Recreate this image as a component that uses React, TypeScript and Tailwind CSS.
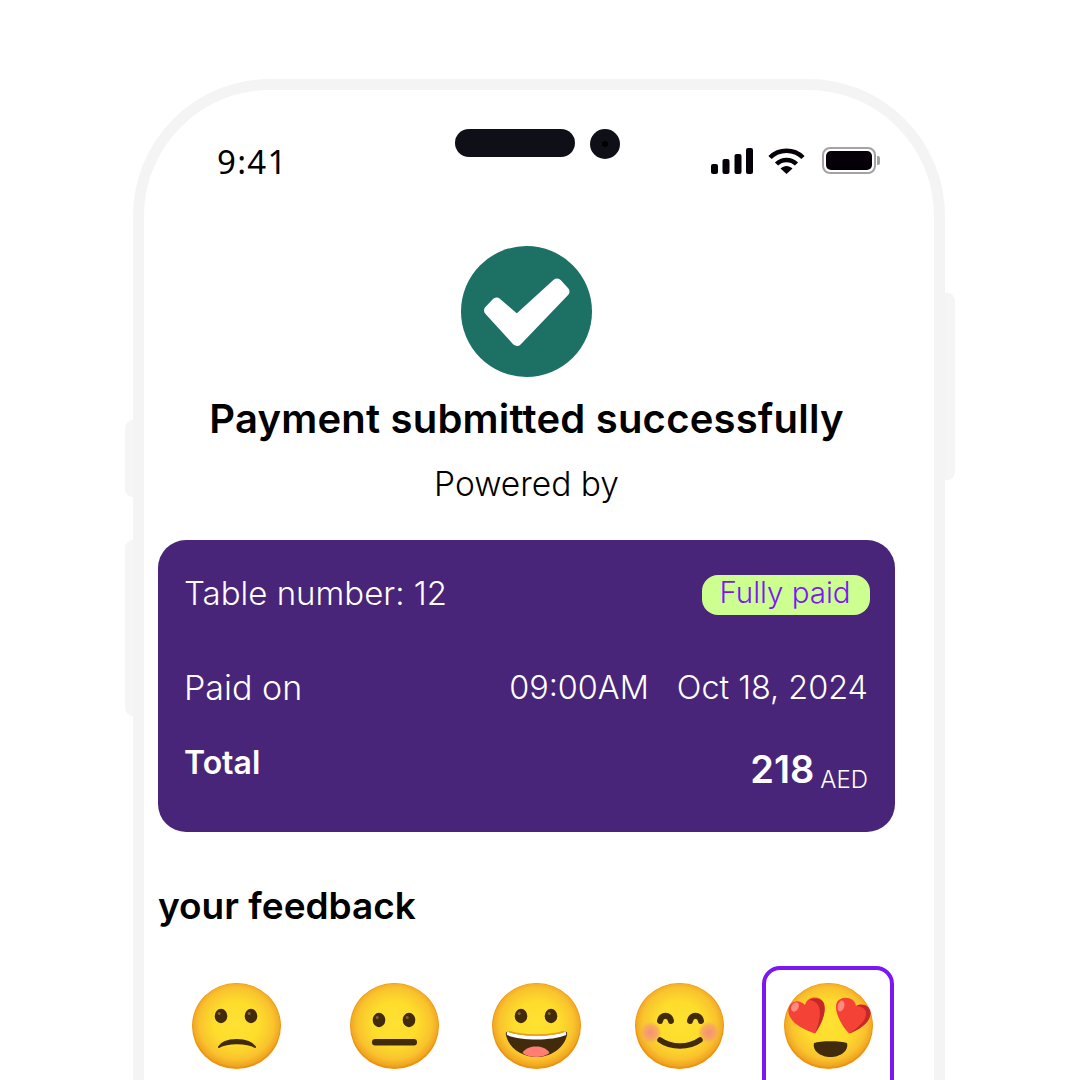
function Defs() {
  return (
    <svg width="0" height="0" className="absolute">
      <defs>
        <radialGradient id="face" cx="50%" cy="48%" r="52%">
          <stop offset="0%" stopColor="#fee133" />
          <stop offset="50%" stopColor="#fedd2b" />
          <stop offset="82%" stopColor="#f9c32e" />
          <stop offset="100%" stopColor="#f0a01e" />
        </radialGradient>
        <radialGradient id="cheek" cx="50%" cy="50%" r="50%">
          <stop offset="0%" stopColor="#f78c7a" />
          <stop offset="70%" stopColor="#f7a860" stopOpacity="0.9" />
          <stop offset="100%" stopColor="#f7b840" stopOpacity="0.3" />
        </radialGradient>
      </defs>
    </svg>
  );
}

function Face({ children, className }: { children?: React.ReactNode; className?: string }) {
  return (
    <svg width="89" height="86" viewBox="0 0 89 86" className={className}>
      <ellipse cx="44.5" cy="43" rx="44.5" ry="43" fill="#ec9410" />
      <ellipse cx="44.5" cy="42.2" rx="43.6" ry="41.8" fill="url(#face)" />
      {children}
    </svg>
  );
}

function Eye({ x, y }: { x: number; y: number }) {
  return (
    <g>
      <ellipse cx={x} cy={y} rx="6.3" ry="7.2" fill="#422b0d" />
      <circle cx={x - 1.8} cy={y - 2.6} r="1.5" fill="#896024" />
    </g>
  );
}

function Sad() {
  return (
    <Face>
      <Eye x={29} y={33} />
      <Eye x={59} y={33} />
      <path d="M27 64C32 54.5 57 54.5 63 64C55 59 35 59 27 64Z" fill="#422b0d" stroke="#422b0d" strokeWidth="2" strokeLinejoin="round" />
    </Face>
  );
}

function Neutral() {
  return (
    <Face>
      <Eye x={29} y={37} />
      <Eye x={59} y={37} />
      <rect x="22" y="56" width="45" height="6.5" rx="3.2" fill="#422b0d" />
    </Face>
  );
}

function Grin() {
  return (
    <Face>
      <Eye x={29} y={33} />
      <Eye x={59} y={33} />
      <path d="M17 49C30 54 59 54 72 49C75 48 75.5 50 75 52C72 66 58 74 44.5 74C31 74 17 66 14 52C13.5 50 14 48 17 49Z" fill="#422b0d" />
      <path d="M17 49C30 54 59 54 72 49C74 48.3 74.5 50 74 52C60 58 29 58 15 52C14.5 50 15 48.3 17 49Z" fill="#fff" />
      <path d="M17 48.5C30 53 59 53 72 48.5" fill="none" stroke="#eb9c1a" strokeWidth="1.5" />
      <path d="M30.5 70C33 65 39 63.5 44 63.5C49 63.5 55 65 57.5 70C53 73 48 74 44.5 74C40 74 35 73 30.5 70Z" fill="#ff7d72" />
    </Face>
  );
}

function Smile() {
  return (
    <Face>
      <circle cx="15.5" cy="49.5" r="10.5" fill="url(#cheek)" />
      <circle cx="74" cy="49.5" r="10.5" fill="url(#cheek)" />
      <path d="M25 38C26 31 35 31 36 38" fill="none" stroke="#422b0d" strokeWidth="6" strokeLinecap="round" />
      <path d="M55 38C56 31 65 31 66 38" fill="none" stroke="#422b0d" strokeWidth="6" strokeLinecap="round" />
      <path d="M25 57C36 65 54 65 65 57" fill="none" stroke="#422b0d" strokeWidth="5.5" strokeLinecap="round" />
    </Face>
  );
}

function Love() {
  return (
    <Face>
      <path d="M30 60C36 57.5 57 57.5 63 60C65 68 56 74 46.5 74C37 74 28 68 30 60Z" fill="#422b0d" />
      <path d="M31 50.5C21 47 6 41 4.5 29C3.5 20 13 14 21 22C23 13 36 12 40 20C43 29 37 42 31 50.5Z" fill="#f44336" />
      <path d="M24 17.5C30 14 37 15 39.5 20C43 29 37 42 31 50.5C36 38 39 24 31 19C29 17.5 26 17 24 17.5Z" fill="#c62828" />
      <ellipse cx="11" cy="24" rx="3.5" ry="5" fill="#ff8a80" transform="rotate(30 11 24)" />
      <path d="M65 50.5C75 47 85.5 40 86.5 31C87.5 24 80 19 72 23C71 14 58 12 53 19C49 27 57 42 65 50.5Z" fill="#f44336" />
      <path d="M72 23C78 19.5 87 23 86.5 31C85.5 40 75 47 65 50.5C75 44 83 37 82 29C81 25 76 23 72 23Z" fill="#c62828" />
      <ellipse cx="57" cy="23" rx="3.3" ry="5.5" fill="#ff8a80" transform="rotate(15 57 23)" />
    </Face>
  );
}

function Signal() {
  return (
    <svg width="42" height="26" viewBox="0 0 42 26" fill="#050008">
      <rect x="0" y="16" width="7" height="10" rx="2" />
      <rect x="11.5" y="11" width="7" height="15" rx="2" />
      <rect x="23.5" y="6" width="7" height="20" rx="2" />
      <rect x="35" y="0" width="7" height="26" rx="2" />
    </svg>
  );
}

function Wifi() {
  return (
    <svg width="37" height="26" viewBox="0 0 37 26" fill="none">
      <path d="M2 9.5C11 0.5 26 0.5 35 9.5" stroke="#050008" strokeWidth="4.5" />
      <path d="M8.5 16C14 10.5 23 10.5 28.5 16" stroke="#050008" strokeWidth="4.5" />
      <path d="M12.5 20.5C16 17 21 17 24.5 20.5L18.5 26Z" fill="#050008" />
    </svg>
  );
}

function Battery() {
  return (
    <div className="flex items-center">
      <div className="w-[54px] h-[27px] rounded-[8px] border-2 border-[#a3a3a6] p-[2px]">
        <div className="w-full h-full rounded-[5px] bg-[#050008]" />
      </div>
      <div className="ml-[1px] w-[3px] h-[9px] rounded-r-[2px] bg-[#a3a3a6]" />
    </div>
  );
}

export default function App() {
  return (
    <div className="relative w-[1080px] h-[1080px] overflow-hidden bg-white [font-family:Inter,sans-serif] text-black">
      <Defs />
      {/* side buttons */}
      <div className="absolute left-[125px] top-[420px] w-[12px] h-[77px] rounded-l-[8px] bg-[#f5f5f5]" />
      <div className="absolute left-[125px] top-[540px] w-[12px] h-[176px] rounded-l-[8px] bg-[#f5f5f5]" />
      <div className="absolute left-[942px] top-[293px] w-[13px] h-[187px] rounded-r-[8px] bg-[#f5f5f5]" />

      <div className="pt-[79px] pl-[133px]">
        <div className="relative w-[812px] h-[1400px] rounded-[137px] border-[11px] border-[#f4f4f4] bg-white">
          {/* status bar */}
          <div className="flex items-start h-[156px] pl-[73px] pr-[54px]">
            <div className="mt-[50px] w-[238px] text-[33px] leading-[44px] tracking-[1.3px] [font-family:'Noto_Sans',sans-serif]">9:41</div>
            <div className="mt-[39px] w-[120px] h-[28px] rounded-full bg-[#0f0f17]" />
            <div className="mt-[39px] ml-[15px] w-[30px] h-[30px] rounded-full bg-[#0f0f17] flex items-center justify-center">
              <div className="w-[6px] h-[6px] rounded-full bg-black" />
            </div>
            <div className="ml-auto mt-[57px] flex items-center gap-[15px] h-[27px]">
              <Signal />
              <Wifi />
              <div className="ml-[2px]"><Battery /></div>
            </div>
          </div>

          {/* content */}
          <div className="ml-[14px] w-[737px] flex flex-col items-center">
            <div className="w-[131px] h-[131px] rounded-full bg-[#1d7064] flex items-center justify-center">
              <svg width="131" height="131" viewBox="0 0 131 131" fill="#fff">
                <path d="M28 64.4L35.6 56.5L56 74L96 37.5L103.5 45.6L56 95Z" stroke="#fff" strokeWidth="10" strokeLinejoin="round" />
              </svg>
            </div>
            <h1 className="mt-[14px] text-[40px] leading-[56px] font-semibold whitespace-nowrap tracking-[0.2px]">Payment submitted successfully</h1>
            <p className="mt-[15px] text-[33.5px] leading-[44px] font-light whitespace-nowrap">Powered by</p>

            <div className="mt-[34px] w-full h-[292px] rounded-[28px] bg-[#482578] text-white pl-[26px] pr-[27px] flex flex-col">
              <div className="mt-[35px] flex items-center justify-between h-[40px]">
                <span className="mt-[-5px] text-[33px] leading-[40px] font-light">Table number: 12</span>
                <span className="mr-[-2px] w-[168px] h-[40px] pr-[2px] rounded-[16px] bg-[#ccff90] text-[#7c16f5] text-[29.5px] leading-[34px] font-light text-center">Fully paid</span>
              </div>
              <div className="mt-[51px] flex items-center justify-between h-[44px] text-[32.4px] leading-[44px] font-light">
                <span className="text-[34px]">Paid on</span>
                <div className="flex gap-[28px]">
                  <span>09:00AM</span>
                  <span>Oct 18, 2024</span>
                </div>
              </div>
              <div className="mt-[27px] flex items-start justify-between">
                <span className="mt-[4px] text-[32px] leading-[44px] font-semibold">Total</span>
                <div className="mt-[6px] flex items-end gap-[6px]">
                  <span className="text-[38px] leading-[52px] font-semibold">218</span>
                  <span className="text-[24px] leading-[30px] font-light">AED</span>
                </div>
              </div>
            </div>

            <h2 className="mt-[52px] self-start text-[37px] leading-[44px] font-semibold whitespace-nowrap">your feedback</h2>

            <div className="mt-[38px] self-start w-full flex items-start">
              <div className="ml-[34px] mt-[17px]"><Sad /></div>
              <div className="ml-[69px] mt-[17px]"><Neutral /></div>
              <div className="ml-[53px] mt-[17px]"><Grin /></div>
              <div className="ml-[54px] mt-[17px]"><Smile /></div>
              <div className="ml-[38px] w-[132px] h-[160px] rounded-[18px] border-[4px] border-[#7c16f5] flex justify-center pt-[13px]">
                <Love />
              </div>
            </div>
          </div>
        </div>
      </div>
    </div>
  );
}
